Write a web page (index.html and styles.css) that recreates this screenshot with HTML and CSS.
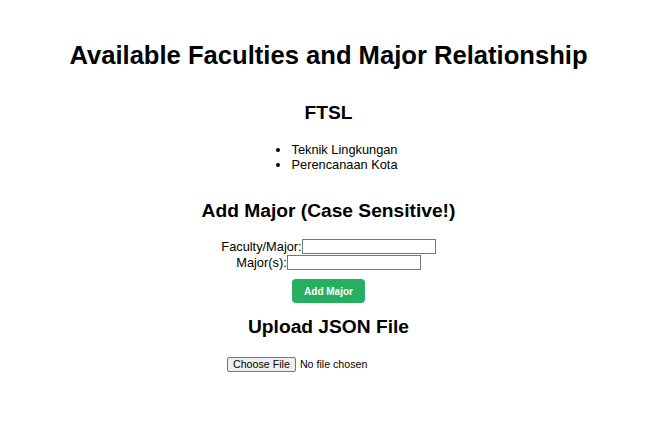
FILE: index.html
```html
<!DOCTYPE html>
<html lang="en">
<head>
<meta charset="utf-8">
<title>Available Faculties and Major Relationship</title>
<link rel="stylesheet" href="styles.css">
</head>
<body>
  <h1 class="title">Available Faculties and Major Relationship</h1>
  <div class="faculty">
    <h2 class="faculty-name">FTSL</h2>
    <ul class="majors">
      <li>Teknik Lingkungan</li>
      <li>Perencanaan Kota</li>
    </ul>
  </div>
  <h2 class="section-title add-title">Add Major (Case Sensitive!)</h2>
  <form class="add-form">
    <div class="form-row">
      <label for="faculty">Faculty/Major:</label><input id="faculty" type="text" class="text-input">
    </div>
    <div class="form-row">
      <label for="majors">Major(s):</label><input id="majors" type="text" class="text-input">
    </div>
    <button type="button" class="add-btn">Add Major</button>
  </form>
  <h2 class="section-title upload-title">Upload JSON File</h2>
  <input type="file" class="file-input">
</body>
</html>
```
FILE: styles.css
```css
html, body {
  margin: 0;
  padding: 0;
}
body {
  font-family: "Liberation Sans", Arial, sans-serif;
  font-size: 12.8px;
  color: #000;
  background: #fff;
  display: flex;
  flex-direction: column;
  align-items: center;
  text-align: center;
  overflow: hidden;
}
.title {
  margin: 40px 0 0;
  font-size: 25.6px;
  line-height: 30px;
  font-weight: bold;
}
.faculty {
  display: flex;
  flex-direction: column;
  align-items: center;
}
.faculty-name,
.section-title {
  font-size: 19.2px;
  line-height: 22px;
  font-weight: bold;
  margin: 0;
}
.faculty-name {
  margin-top: 32px;
}
.majors {
  margin: 18px 0 0;
  padding-left: 32px;
  text-align: left;
}
.majors li {
  line-height: 15px;
}
.add-title {
  margin-top: 28px;
}
.add-form {
  margin: 17px 0 0;
  display: flex;
  flex-direction: column;
  align-items: center;
}
.form-row {
  display: flex;
  align-items: flex-start;
  justify-content: center;
  height: 16px;
}
.form-row label {
  line-height: 15px;
}
.text-input {
  box-sizing: border-box;
  width: 134px;
  height: 15px;
  margin: 0;
  padding: 0 2px;
  border: 1px solid #767676;
  border-radius: 0;
  background: #fff;
  font-size: 10.67px;
}
.add-btn {
  margin-top: 8px;
  height: 24px;
  padding: 0 12px;
  border: none;
  border-radius: 4px;
  background: #27ae60;
  color: #fff;
  font-family: "Liberation Sans", Arial, sans-serif;
  font-size: 10px;
  font-weight: bold;
}
.upload-title {
  margin-top: 13px;
}
.file-input {
  margin-top: 19px;
  width: 203px;
  font-family: "Liberation Sans", Arial, sans-serif;
  font-size: 10.67px;
  line-height: 15px;
  text-align: left;
}
.file-input::file-selector-button {
  box-sizing: border-box;
  height: 15px;
  margin: 0 4px 0 0;
  padding: 0 5px;
  border: 1px solid #767676;
  border-radius: 2px;
  background: #efefef;
  color: #000;
  font-family: "Liberation Sans", Arial, sans-serif;
  font-size: 10.67px;
  line-height: 13px;
}
```
